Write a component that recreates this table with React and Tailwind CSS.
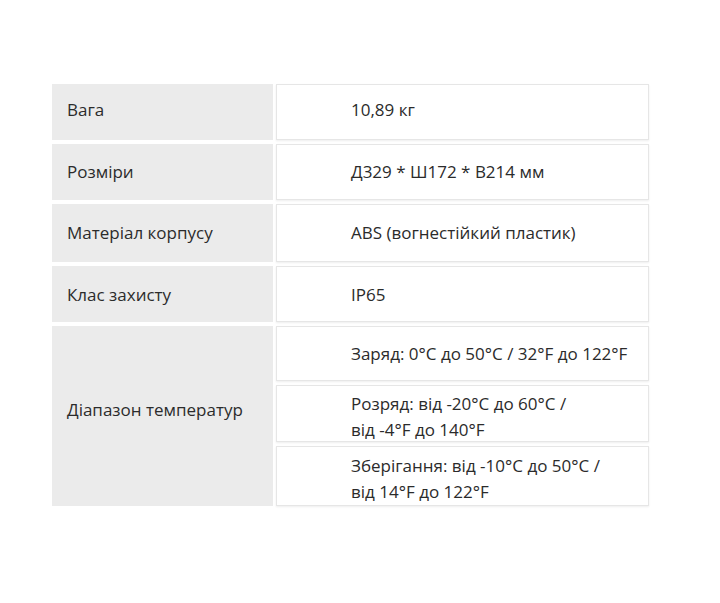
const rows = [
  { label: 'Вага', value: ['10,89 кг'], h: 'h-[56px] pb-[5px]' },
  { label: 'Розміри', value: ['Д329 * Ш172 * В214 мм'], h: 'h-[56px]' },
  { label: 'Матеріал корпусу', value: ['ABS (вогнестійкий пластик)'], h: 'h-[58px]' },
  { label: 'Клас захисту', value: ['IP65'], h: 'h-[56px] pt-[2px]' },
];

const temps = [
  ['Заряд: 0°C до 50°C / 32°F до 122°F'],
  ['Розряд: від -20°C до 60°C /', 'від -4°F до 140°F'],
  ['Зберігання: від -10°C до 50°C /', 'від 14°F до 122°F'],
];

function ValueCell({ lines, h }) {
  return (
    <div
      className={`flex flex-col justify-center bg-white border border-[#e6e6e6] shadow-[0_1px_2px_rgba(0,0,0,0.07)] pl-[74px] pr-3 ${h}`}
    >
      {lines.map((l, i) => (
        <span key={i} className="leading-[26px]">
          {l}
        </span>
      ))}
    </div>
  );
}

export default function App() {
  return (
    <div
      className="w-[720px] h-[603px] bg-white pt-[84px] pl-[52px] text-[17px] text-[#2b2b2b]"
      style={{ fontFamily: '"Open Sans", "Noto Sans", sans-serif' }}
    >
      <div className="grid grid-cols-[221px_373px] gap-x-[3px] gap-y-[4px]">
        {rows.map((r) => (
          <div key={r.label} className="contents">
            <div className={`bg-[#ebebeb] flex items-center pl-[15px] ${r.h}`}>{r.label}</div>
            <ValueCell lines={r.value} h={r.h} />
          </div>
        ))}
        <div className="row-span-3 bg-[#ebebeb] flex items-center pl-[15px] pb-[12px]">Діапазон температур</div>
        <ValueCell lines={temps[0]} h="h-[55px]" />
        <ValueCell lines={temps[1]} h="h-[57px] pt-[7px]" />
        <ValueCell lines={temps[2]} h="h-[60px] pt-[6px]" />
      </div>
    </div>
  );
}
